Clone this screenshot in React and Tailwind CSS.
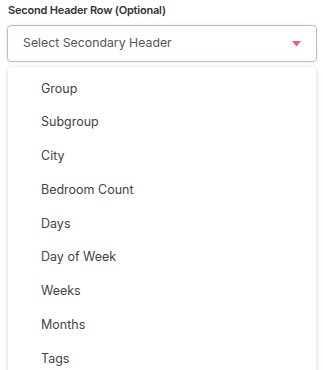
import React from 'react';

const options = ['Group', 'Subgroup', 'City', 'Bedroom Count', 'Days', 'Day of Week', 'Weeks', 'Months', 'Tags'];

const App = () => {
    return (
        <div className="w-[323px] h-[370px] overflow-hidden bg-white font-['Inter','Liberation_Sans',sans-serif]">
            <div className="pl-[8px] pr-[6px] pt-[3px]">
                {/* Label */}
                <label className="block text-[11px] font-semibold text-[#333] leading-[14px] tracking-[-0.2px]">
                    Second Header Row (Optional)
                </label>

                {/* Select trigger */}
                <div className="mt-[8px] ml-[-1px] h-[37px] rounded-[4px] border border-[#bdbdbd] shadow-[0_0_3px_rgba(240,120,120,0.25)] flex items-center justify-between pl-[15px] pr-[15px]">
                    <span className="text-[12.3px] text-[#555]">Select Secondary Header</span>
                    <svg width="9" height="6" viewBox="0 0 9 6">
                        <path d="M0 0 H9 L4.5 5.5 Z" fill="#f0606a" />
                    </svg>
                </div>

                {/* Menu */}
                <div className="mt-[5px] w-[308px] rounded-[4px] bg-white shadow-[0_1px_5px_rgba(0,0,0,0.18)] pt-[5px] pb-[20px]">
                    {options.map((opt) => (
                        <div key={opt} className="h-[33.75px] flex items-center pl-[33px] text-[12.5px] text-[#444]">
                            {opt}
                        </div>
                    ))}
                </div>
            </div>
        </div>
    );
};

export default App;
